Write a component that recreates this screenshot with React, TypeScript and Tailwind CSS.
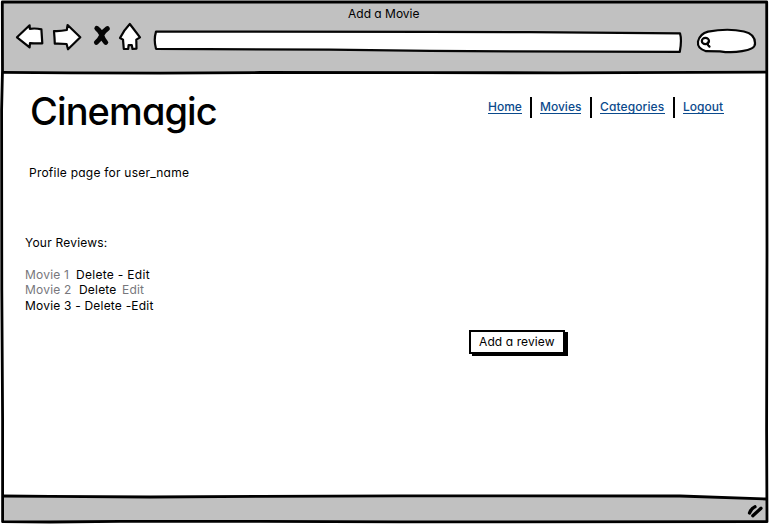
import React from "react";

const ink = "#050505";

function Nav({ label, className }: { label: string; className: string }) {
  return (
    <a href="#" className={`whitespace-nowrap border-b border-[#0b4a8c] text-[#0b4a8c] leading-[16px] h-[15px] block font-[450] ${className}`}>
      {label}
    </a>
  );
}

function Toolbar() {
  return (
    <svg width="769" height="50" viewBox="0 24 769 50" fill="#fff" stroke={ink} strokeWidth="2.2" strokeLinejoin="round" strokeLinecap="round" className="block overflow-visible">
      <path d="M17 37.3 L29.6 25.3 L29.8 28.8 Q36 28 41.4 29.4 L42.3 43.4 Q36 43.6 30 43.2 L29.6 47.4 Z" />
      <path d="M54 31 Q60 31.4 66.8 30 L67.6 25 L80.3 37.2 L68 49.3 L66.6 44 Q60 43.5 54.8 43.7 Q54.6 38 54 31 Z" />
      <path d="M96.8 28.4 Q99.5 30.2 101.4 34.2 M107.3 28.6 Q103.5 31 101.6 35.4 Q99.5 40 96.4 42.4 M101.8 35.4 Q103.3 40 105.8 42.4" fill="none" strokeWidth="4.9" />
      <path d="M129.8 24 L140 37.4 L136.3 39.6 L136.5 48.6 L132.5 49 L131.8 45.2 L128.6 45.2 L128.2 49 L123.8 49 L123 39.6 L120 38 Q124 30 129.8 24 Z" />
      <path d="M156 31.6 L430 31.8 L530 32.2 L680 33.3 Q682 40 679.8 51.8 L510 51.4 L430 50.8 L330 49.7 L156 48.8 Q153.5 40 156 31.6 Z" />
      <path d="M708 31.6 Q728 28 744 31.5 Q755 34 755 43 Q755.8 49 742 51.2 Q731 53.2 720 51.3 L706 51.2 Q697 48.5 698 41.5 Q700 33.5 708 31.6 Z" />
      <ellipse cx="705.4" cy="41" rx="3.6" ry="3.1" fill="none" />
      <path d="M707.8 42.5 L707.9 45 L709.5 46.6" fill="none" />
    </svg>
  );
}

export default function App() {
  return (
    <div className="relative flex h-[524px] w-[769px] flex-col overflow-hidden bg-white font-['Inter','Liberation_Sans',sans-serif] text-[12px] font-[430] text-black [font-feature-settings:'cv11','ss03']">
      <header className="h-[73px] shrink-0 bg-[#c1c1c1]">
        <div className="h-6 pl-[348px] pt-[6px] leading-[16px] whitespace-nowrap text-[12px]">Add a Movie</div>
        <Toolbar />
      </header>

      <main className="flex h-[421px] shrink-0 flex-col">
        <div className="flex h-[84px] shrink-0 justify-between pl-[30px] pr-[45px]">
          <h1 className="pt-[14px] text-[38px] font-medium tracking-[-0.9px] leading-[48px] whitespace-nowrap">Cinemagic</h1>
          <nav className="flex h-[21px] mt-[24px]">
            <Nav label="Home" className="mt-[2px] w-[34px]" />
            <span className="ml-[8px] mr-[8px] w-[2px] bg-black" />
            <Nav label="Movies" className="mt-[2px] w-[41px]" />
            <span className="ml-[9px] mr-[8px] w-[2px] bg-black" />
            <Nav label="Categories" className="mt-[2px] w-[65px] tracking-[0.1px]" />
            <span className="ml-[8px] mr-[8px] w-[2px] bg-black" />
            <Nav label="Logout" className="mt-[2px] w-[41px]" />
          </nav>
        </div>
        <p className="pl-[29px] pt-[8px] leading-[16px] tracking-[0.23px] whitespace-nowrap">Profile page for user_name</p>
        <h2 className="mt-[54px] pl-[25px] leading-[16px] tracking-[0.21px] whitespace-nowrap">Your Reviews:</h2>
        <ul className="mt-[16px] pl-[25px] leading-[15.5px] tracking-[0.2px] whitespace-nowrap">
          <li className="flex h-[15px]">
            <span className="w-[51px] text-[#77777c]">Movie 1</span>
            <span className="tracking-[0.3px]">Delete - Edit</span>
          </li>
          <li className="flex h-[16px]">
            <span className="w-[54px] text-[#77777c]">Movie 2</span>
            <span className="w-[43px]">Delete</span>
            <span className="text-[#77777c]">Edit</span>
          </li>
          <li>Movie 3 - Delete -Edit</li>
        </ul>
        <div className="ml-[469px] mt-[16px]">
          <button className="block h-[24px] w-[96px] border-2 border-black bg-white text-left pl-[8px] leading-[20px] tracking-[0.1px] whitespace-nowrap shadow-[3px_2px_0_#000]">Add a review</button>
        </div>
      </main>

      <footer className="h-[30px] shrink-0">
        <svg width="769" height="30" viewBox="0 494 769 30" className="block">
          <path d="M2 496 L150 497 L260 496.3 L680 495.8 L767 499 V522 H2 Z" fill="#c1c1c1" />
          <path d="M2 496 L50 496.4 L150 497 L260 496.3 L400 495.8 L680 496 L767 499" fill="none" stroke="#000" strokeWidth="2.8" />
          <path d="M749.5 513 Q751 508.5 755 506.8 M752.8 515.7 Q757 512 761 508.3" fill="none" stroke="#000" strokeWidth="3.3" strokeLinecap="round" />
        </svg>
      </footer>

      <svg width="769" height="524" viewBox="0 0 769 524" className="pointer-events-none absolute inset-0" fill="none" stroke="#000" strokeWidth="2.8">
        <path d="M0 0 H769 V524 H0 Z M2 2 V522 H767 V2 Z" fill="#fff" fillRule="evenodd" stroke="none" />
        <path d="M2.3 2 L2.5 70 L1.6 110 L1.8 290 L2.6 420 L2.6 521.7 L50 522 L120 521.4 L260 521.4 L400 521.9 L767 521.7 L766.6 430 L767 250 L766.7 2 Z" strokeLinejoin="round" />
        <path d="M2.5 72.4 L70 72.9 L160 73.2 L260 72.5 L425 72.7 L560 72.8 L767 72.2" />
      </svg>
    </div>
  );
}
